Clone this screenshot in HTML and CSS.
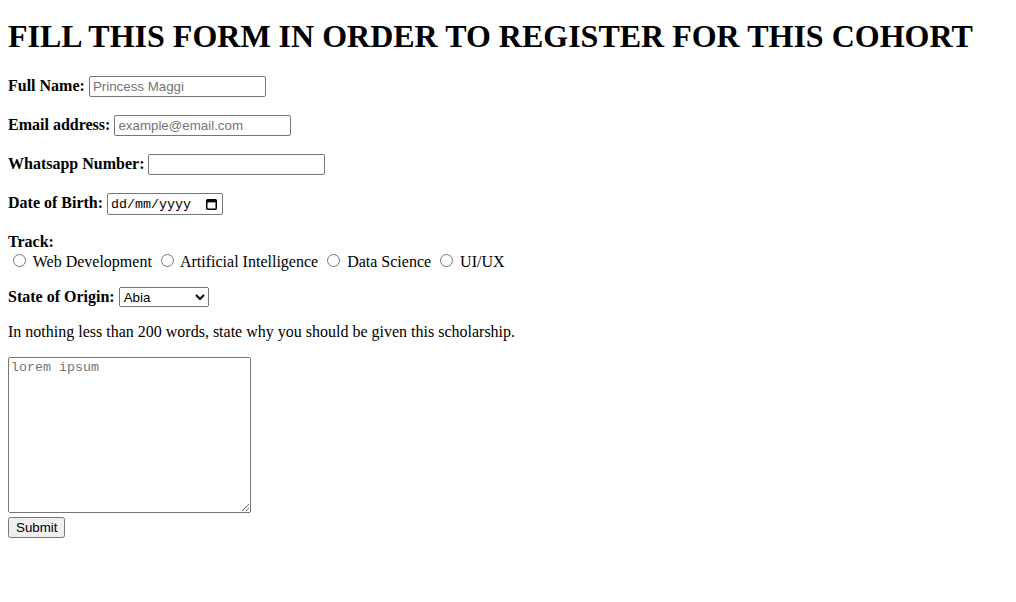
FILE: index.html
```html
<!DOCTYPE html>
<html>
<head>
<meta charset="utf-8">
<title>Register</title>
<link rel="stylesheet" href="styles.css">
</head>
<body class="page">
<h1 class="title">FILL THIS FORM IN ORDER TO REGISTER FOR THIS COHORT</h1>
<form class="form">
  <p class="row"><label class="lbl" for="name">Full Name:</label> <input class="field" type="text" id="name" placeholder="Princess Maggi"></p>
  <p class="row"><label class="lbl" for="email">Email address:</label> <input class="field" type="email" id="email" placeholder="example@email.com"></p>
  <p class="row"><label class="lbl" for="phone">Whatsapp Number:</label> <input class="field" type="tel" id="phone"></p>
  <p class="row"><label class="lbl" for="dob">Date of Birth:</label> <span class="date"><input class="date-text" type="text" id="dob" placeholder="dd/mm/yyyy"><svg class="cal" width="11" height="11" viewBox="0 0 11 11"><rect x="0.75" y="0.75" width="9.5" height="9.5" rx="1" fill="none" stroke="#000" stroke-width="1.5"/><rect x="0.75" y="0.75" width="9.5" height="2.6" fill="#000"/></svg></span></p>
  <p class="row"><span class="lbl">Track:</span><br>
    <input class="radio" type="radio" name="track" id="t1"> <label for="t1">Web Development</label>
    <input class="radio" type="radio" name="track" id="t2"> <label for="t2">Artificial Intelligence</label>
    <input class="radio" type="radio" name="track" id="t3"> <label for="t3">Data Science</label>
    <input class="radio" type="radio" name="track" id="t4"> <label for="t4">UI/UX</label>
  </p>
  <p class="row"><label class="lbl" for="state">State of Origin:</label> <select class="sel" id="state">
    <option>Abia</option><option>Adamawa</option><option>Akwa Ibom</option><option>Anambra</option>
  </select></p>
  <p class="row">In nothing less than 200 words, state why you should be given this scholarship.</p>
  <textarea class="essay" placeholder="lorem ipsum"></textarea><br>
  <button class="btn" type="submit">Submit</button>
</form>
</body>
</html>
```
FILE: styles.css
```css
.page {
  margin: 8px;
  font-family: "Liberation Serif", serif;
  font-size: 16px;
  color: #000;
  background: #fff;
}
.title {
  font-size: 32px;
  margin: 10px 0 21px;
}
.lbl { font-weight: bold; }
.field, .sel, .btn {
  font-family: "Liberation Sans", Arial, sans-serif;
  font-size: 13.33px;
}
.field {
  width: 177px;
  height: 21px;
  box-sizing: border-box;
  border: 1px solid #767676;
  border-radius: 2px;
  padding: 1px 3px;
  margin: 0 0 2px;
}
.field::placeholder { color: #757575; }
.date {
  display: inline-flex;
  align-items: center;
  width: 116px;
  height: 22px;
  box-sizing: border-box;
  border: 1px solid #767676;
  border-radius: 2px;
  padding: 0 5px 0 3px;
  margin-bottom: 2px;
  background: #fff;
}
.date-text {
  font-family: "Liberation Mono", monospace;
  font-size: 13.33px;
  border: 0;
  padding: 0;
  margin: 0;
  width: 90px;
  outline: none;
  background: transparent;
}
.date-text::placeholder { color: #000; }
.cal { margin-left: auto; }
.radio { margin: 3px 3px 0 5px; }
.sel {
  width: 90px;
  height: 20px;
}
.essay {
  font-family: "Liberation Mono", monospace;
  font-size: 13.33px;
  width: 243px;
  height: 156px;
  box-sizing: border-box;
}
.essay::placeholder { color: #757575; }
.btn {
  height: 21px;
  padding: 1px 6px;
}
```
